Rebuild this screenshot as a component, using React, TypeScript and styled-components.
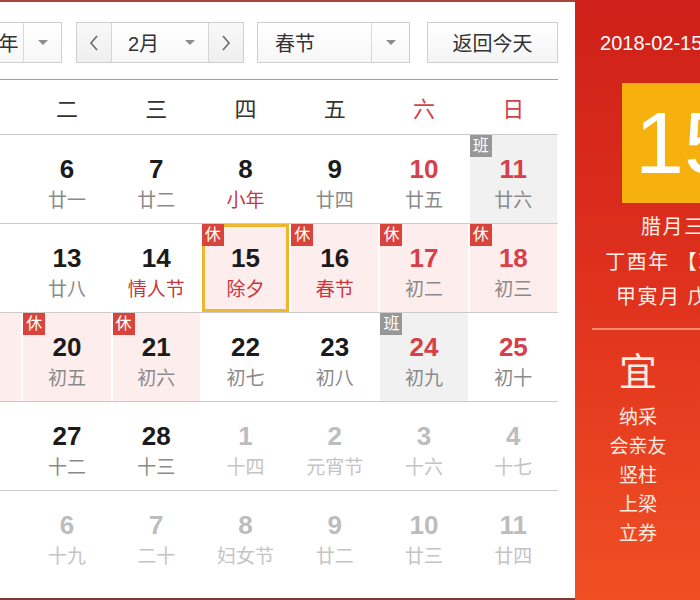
import styled, { createGlobalStyle } from "styled-components";

const GlobalStyle = createGlobalStyle`
  html, body {
    margin: 0;
    padding: 0;
    background: #fff;
  }
  body {
    width: 700px;
    height: 600px;
    overflow: hidden;
    font-family: "Liberation Sans", "Noto Sans CJK SC", sans-serif;
  }
`;

type Tone = "black" | "red" | "muted";
type Fill = "none" | "pink" | "gray";

interface Day {
  num: number;
  lunar: string;
  numTone?: Tone;
  lunarTone?: "gray" | "red" | "muted";
  fill?: Fill;
  badge?: "休" | "班";
  selected?: boolean;
}

const numColors: Record<Tone, string> = {
  black: "#1b1b1b",
  red: "#d6404a",
  muted: "#bdbdbd",
};

const lunarColors = {
  gray: "#8a8a8a",
  red: "#c9363d",
  muted: "#c4c4c4",
};

const fills: Record<Fill, string> = {
  none: "transparent",
  pink: "#fdeded",
  gray: "#f1f1f1",
};

const weeks: Day[][] = [
  [
    { num: 5, lunar: "二十" },
    { num: 6, lunar: "廿一" },
    { num: 7, lunar: "廿二" },
    { num: 8, lunar: "小年", lunarTone: "red" },
    { num: 9, lunar: "廿四" },
    { num: 10, lunar: "廿五", numTone: "red" },
    { num: 11, lunar: "廿六", numTone: "red", fill: "gray", badge: "班" },
  ],
  [
    { num: 12, lunar: "廿七" },
    { num: 13, lunar: "廿八" },
    { num: 14, lunar: "情人节", lunarTone: "red" },
    { num: 15, lunar: "除夕", lunarTone: "red", fill: "pink", badge: "休", selected: true },
    { num: 16, lunar: "春节", lunarTone: "red", fill: "pink", badge: "休" },
    { num: 17, lunar: "初二", numTone: "red", fill: "pink", badge: "休" },
    { num: 18, lunar: "初三", numTone: "red", fill: "pink", badge: "休" },
  ],
  [
    { num: 19, lunar: "雨水", fill: "pink", badge: "休" },
    { num: 20, lunar: "初五", fill: "pink", badge: "休" },
    { num: 21, lunar: "初六", fill: "pink", badge: "休" },
    { num: 22, lunar: "初七" },
    { num: 23, lunar: "初八" },
    { num: 24, lunar: "初九", numTone: "red", fill: "gray", badge: "班" },
    { num: 25, lunar: "初十", numTone: "red" },
  ],
  [
    { num: 26, lunar: "十一" },
    { num: 27, lunar: "十二" },
    { num: 28, lunar: "十三" },
    { num: 1, lunar: "十四", numTone: "muted", lunarTone: "muted" },
    { num: 2, lunar: "元宵节", numTone: "muted", lunarTone: "muted" },
    { num: 3, lunar: "十六", numTone: "muted", lunarTone: "muted" },
    { num: 4, lunar: "十七", numTone: "muted", lunarTone: "muted" },
  ],
  [
    { num: 5, lunar: "惊蛰", numTone: "muted", lunarTone: "muted" },
    { num: 6, lunar: "十九", numTone: "muted", lunarTone: "muted" },
    { num: 7, lunar: "二十", numTone: "muted", lunarTone: "muted" },
    { num: 8, lunar: "妇女节", numTone: "muted", lunarTone: "muted" },
    { num: 9, lunar: "廿二", numTone: "muted", lunarTone: "muted" },
    { num: 10, lunar: "廿三", numTone: "muted", lunarTone: "muted" },
    { num: 11, lunar: "廿四", numTone: "muted", lunarTone: "muted" },
  ],
];

const weekDays = ["一", "二", "三", "四", "五", "六", "日"];

const Widget = styled.div`
  display: flex;
  height: 600px;
  margin-left: -67px;
`;

const Main = styled.section`
  width: 642px;
  flex-shrink: 0;
  box-sizing: border-box;
  padding-right: 17px;
  border-top: 2px solid #a8453d;
  border-bottom: 2px solid #7e3a37;
  display: flex;
  flex-direction: column;
`;

// 상단 툴바
const Toolbar = styled.div`
  display: flex;
  height: 41px;
  margin: 20px 0 16px;
`;

const SelectBox = styled.div<{ $w: number; $gap?: number }>`
  display: flex;
  width: ${(p) => p.$w}px;
  margin-left: ${(p) => p.$gap ?? 0}px;
  box-sizing: border-box;
  border: 1px solid #cfcfcf;
  background: linear-gradient(#ffffff, #f7f7f7);
`;

const SelectLabel = styled.div<{ $pad?: number }>`
  flex: 1;
  display: flex;
  align-items: center;
  padding-left: ${(p) => p.$pad ?? 17}px;
  font-size: 20px;
  color: #333;
  white-space: nowrap;
`;

const ArrowCell = styled.div<{ $divider?: boolean }>`
  width: 37px;
  display: flex;
  align-items: center;
  justify-content: center;
  border-left: ${(p) => (p.$divider ? "1px solid #d9d9d9" : "none")};
`;

const Caret = styled.span`
  width: 0;
  height: 0;
  border-left: 5px solid transparent;
  border-right: 5px solid transparent;
  border-top: 5px solid #8d8d8d;
`;

const NavButton = styled.div<{ $side: "left" | "right" }>`
  width: 34px;
  display: flex;
  align-items: center;
  justify-content: center;
  background: linear-gradient(#f8f8f8, #efefef);
  border-${(p) => (p.$side === "left" ? "right" : "left")}: 1px solid #d6d6d6;
`;

const TodayButton = styled.button`
  margin-left: 17px;
  width: 131px;
  height: 41px;
  padding: 0;
  border: 1px solid #cfcfcf;
  background: linear-gradient(#ffffff, #f4f4f4);
  font-family: inherit;
  font-size: 20px;
  color: #333;
`;

const WeekHeader = styled.div`
  display: grid;
  grid-template-columns: repeat(7, 1fr);
  align-items: center;
  height: 54px;
  border-top: 1px solid #bf968c;
  border-bottom: 1px solid #cbcbcb;
`;

const WeekDay = styled.div<{ $weekend: boolean }>`
  text-align: center;
  font-size: 22px;
  color: ${(p) => (p.$weekend ? "#d2424a" : "#333")};
`;

const Row = styled.div<{ $last: boolean }>`
  display: grid;
  grid-template-columns: repeat(7, 1fr);
  height: 89px;
  box-sizing: border-box;
  border-bottom: ${(p) => (p.$last ? "none" : "1px solid #cbcbcb")};
`;

const Cell = styled.div<{ $fill: Fill; $selected: boolean }>`
  position: relative;
  margin: 0 1px;
  display: flex;
  flex-direction: column;
  align-items: center;
  padding-top: 20px;
  background: ${(p) => fills[p.$fill]};
  box-shadow: ${(p) => (p.$selected ? "inset 0 0 0 3px #efb630" : "none")};
`;

const Num = styled.span<{ $tone: Tone }>`
  font-size: 26px;
  font-weight: bold;
  line-height: 28px;
  color: ${(p) => numColors[p.$tone]};
`;

const Lunar = styled.span<{ $tone: keyof typeof lunarColors }>`
  margin-top: 6px;
  font-size: 19px;
  line-height: 24px;
  color: ${(p) => lunarColors[p.$tone]};
  white-space: nowrap;
`;

const Badge = styled.span<{ $kind: "休" | "班" }>`
  position: absolute;
  top: 0;
  left: 0;
  width: 22px;
  height: 22px;
  line-height: 22px;
  text-align: center;
  font-size: 16px;
  color: #fff;
  background: ${(p) => (p.$kind === "休" ? "#d8443b" : "#979797")};
`;

// 오른쪽 빨간 패널
const Panel = styled.aside`
  width: 218px;
  flex-shrink: 0;
  box-sizing: border-box;
  padding: 0 17px;
  display: flex;
  flex-direction: column;
  align-items: center;
  color: #fff;
  background: linear-gradient(180deg, #cf2019 0%, #de301d 45%, #f04f24 100%);
`;

const DateLine = styled.div`
  margin-top: 31px;
  font-size: 20px;
  line-height: 24px;
  white-space: nowrap;
`;

const DayBox = styled.div`
  margin-top: 28px;
  width: 124px;
  height: 120px;
  background: #f6b10f;
  box-shadow: 0 0 2px rgba(150, 60, 0, 0.4);
  text-align: center;
  font-size: 88px;
  line-height: 120px;
  color: #fff;
`;

const InfoLines = styled.div`
  margin-top: 7px;
  text-align: center;
  font-size: 20px;
  line-height: 35px;
  letter-spacing: 1.5px;
  color: #fdeee6;
  white-space: nowrap;
`;

const Divider = styled.div`
  align-self: stretch;
  height: 2px;
  margin-top: 13px;
  background: #f28a6c;
`;

const Advice = styled.div`
  align-self: stretch;
  display: grid;
  grid-template-columns: 1fr 1fr;
`;

const AdviceCol = styled.div`
  display: flex;
  flex-direction: column;
  align-items: center;
  color: #fdece2;
`;

const AdviceHead = styled.div`
  margin-top: 20px;
  font-size: 38px;
  line-height: 44px;
`;

const AdviceList = styled.div`
  margin-top: 9px;
  font-size: 19px;
  line-height: 29px;
  text-align: center;
`;

const Chevron = ({ dir }: { dir: "left" | "right" }) => (
  <svg width="10" height="16" viewBox="0 0 10 16">
    <polyline
      points={dir === "left" ? "8,1 2,8 8,15" : "2,1 8,8 2,15"}
      fill="none"
      stroke="#6a6a6a"
      strokeWidth="1.6"
    />
  </svg>
);

const App = () => {
  return (
    <>
      <GlobalStyle />
      <Widget>
        <Main>
          <Toolbar>
            <SelectBox $w={129}>
              <SelectLabel $pad={20}>2018年</SelectLabel>
              <ArrowCell $divider>
                <Caret />
              </ArrowCell>
            </SelectBox>

            <SelectBox $w={168} $gap={14}>
              <NavButton $side="left">
                <Chevron dir="left" />
              </NavButton>
              <SelectLabel $pad={16}>2月</SelectLabel>
              <ArrowCell>
                <Caret />
              </ArrowCell>
              <NavButton $side="right">
                <Chevron dir="right" />
              </NavButton>
            </SelectBox>

            <SelectBox $w={153} $gap={13}>
              <SelectLabel>春节</SelectLabel>
              <ArrowCell $divider>
                <Caret />
              </ArrowCell>
            </SelectBox>

            <TodayButton>返回今天</TodayButton>
          </Toolbar>

          <WeekHeader>
            {weekDays.map((d, i) => (
              <WeekDay key={d} $weekend={i >= 5}>
                {d}
              </WeekDay>
            ))}
          </WeekHeader>

          {weeks.map((week, wi) => (
            <Row key={wi} $last={wi === weeks.length - 1}>
              {week.map((day, di) => (
                <Cell
                  key={di}
                  $fill={day.fill ?? "none"}
                  $selected={!!day.selected}
                >
                  {day.badge ? <Badge $kind={day.badge}>{day.badge}</Badge> : null}
                  <Num $tone={day.numTone ?? "black"}>{day.num}</Num>
                  <Lunar $tone={day.lunarTone ?? (day.numTone === "muted" ? "muted" : "gray")}>
                    {day.lunar}
                  </Lunar>
                </Cell>
              ))}
            </Row>
          ))}
        </Main>

        <Panel>
          <DateLine>2018-02-15 星期四</DateLine>
          <DayBox>15</DayBox>
          <InfoLines>
            <div>腊月三十</div>
            <div>丁酉年 【鸡年】</div>
            <div>甲寅月 戊午日</div>
          </InfoLines>
          <Divider />
          <Advice>
            <AdviceCol>
              <AdviceHead>宜</AdviceHead>
              <AdviceList>
                <div>纳采</div>
                <div>会亲友</div>
                <div>竖柱</div>
                <div>上梁</div>
                <div>立券</div>
              </AdviceList>
            </AdviceCol>
            <AdviceCol>
              <AdviceHead>忌</AdviceHead>
              <AdviceList>
                <div>嫁娶</div>
                <div>安葬</div>
              </AdviceList>
            </AdviceCol>
          </Advice>
        </Panel>
      </Widget>
    </>
  );
};

export default App;
